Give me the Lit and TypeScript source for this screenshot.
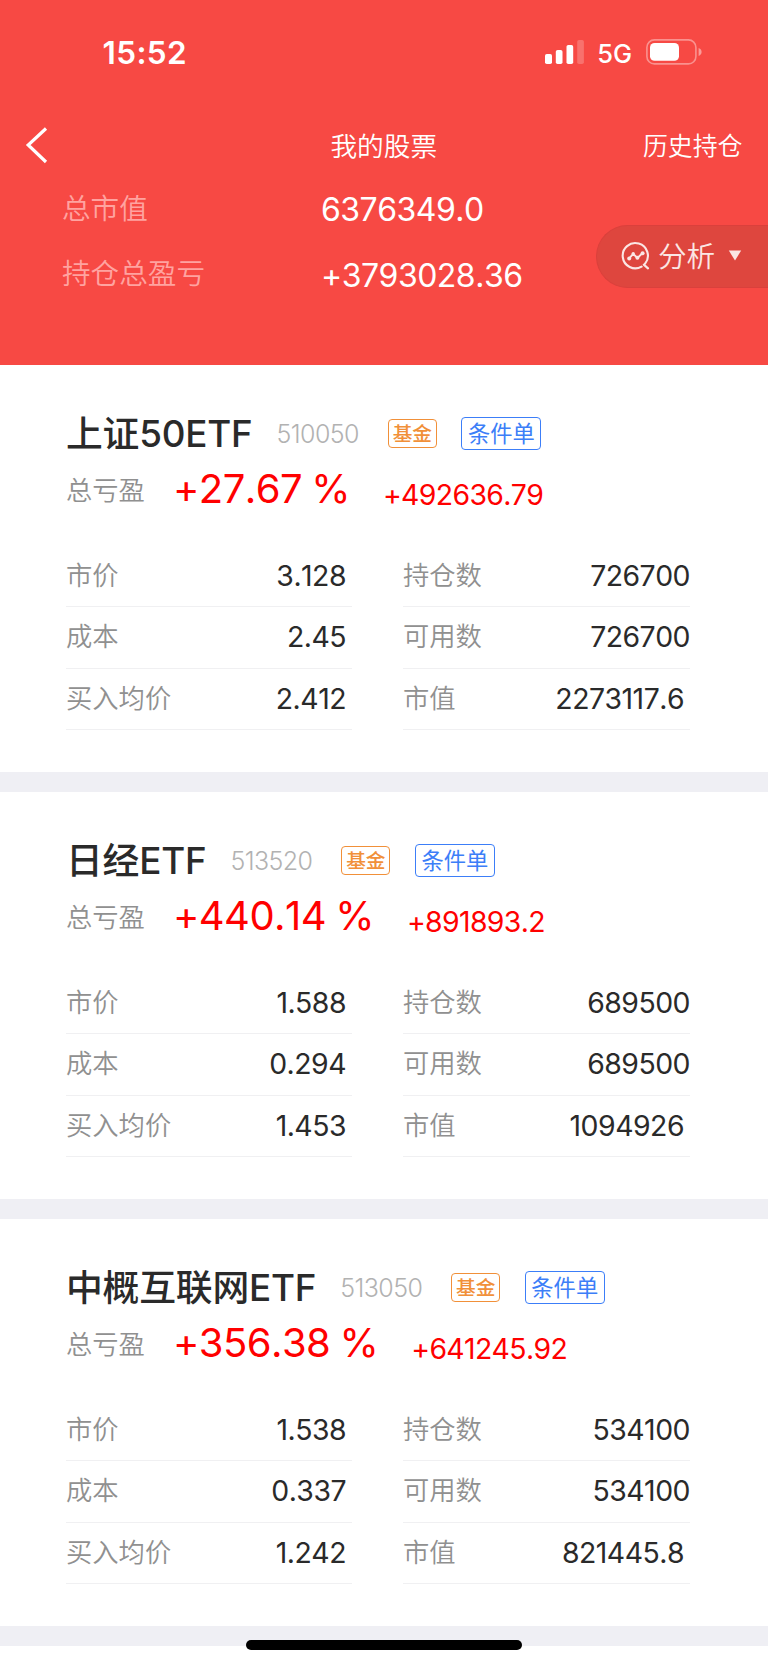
import { LitElement, html, css } from "lit";
import { customElement, property } from "lit/decorators.js";

interface Holding {
  name: string;
  code: string;
  percent: string;
  profit: string;
  left: [string, string][];
  right: [string, string][];
}

const HOLDINGS: Holding[] = [
  {
    name: "上证50ETF", code: "510050", percent: "+27.67 %", profit: "+492636.79",
    left: [["市价", "3.128"], ["成本", "2.45"], ["买入均价", "2.412"]],
    right: [["持仓数", "726700"], ["可用数", "726700"], ["市值", "2273117.6"]],
  },
  {
    name: "日经ETF", code: "513520", percent: "+440.14 %", profit: "+891893.2",
    left: [["市价", "1.588"], ["成本", "0.294"], ["买入均价", "1.453"]],
    right: [["持仓数", "689500"], ["可用数", "689500"], ["市值", "1094926"]],
  },
  {
    name: "中概互联网ETF", code: "513050", percent: "+356.38 %", profit: "+641245.92",
    left: [["市价", "1.538"], ["成本", "0.337"], ["买入均价", "1.242"]],
    right: [["持仓数", "534100"], ["可用数", "534100"], ["市值", "821445.8"]],
  },
];

@customElement("holding-card")
export class HoldingCard extends LitElement {
  @property({ attribute: false }) item!: Holding;

  static styles = css`
    :host { display: block; box-sizing: border-box; height: 427px; padding: 42px 78px 0 66px; background: #fff; border-bottom: 20px solid #efeff4; }
    .title { display: flex; align-items: center; height: 53px; white-space: nowrap; }
    .name { padding-bottom: 5px; font-size: 36.8px; font-weight: 500; letter-spacing: -0.2px; color: #2a2a2a; }
    .code { margin-left: 24px; font-size: 25px; font-weight: 320; letter-spacing: -0.6px; color: #b2b2b2; }
    .tag { box-sizing: border-box; display: flex; justify-content: center; border: 1px solid; border-radius: 4px; }
    .fund { width: 49px; height: 29px; margin-left: 29px; line-height: 28px; font-size: 19.7px; font-weight: 500; color: #f19039; }
    .order { width: 80px; height: 33px; margin-left: 24.5px; line-height: 32px; font-size: 22.3px; color: #3c7ef8; }
    .profit { display: flex; align-items: flex-start; height: 60px; line-height: 58px; white-space: nowrap; }
    .label { font-size: 26.3px; font-weight: 350; color: #909090; }
    .rowlabel { padding-bottom: 5px; }
    .profit .label { line-height: 61px; }
    .percent { margin-left: 28px; font-size: 40px; letter-spacing: -0.55px; word-spacing: -1.5px; font-kerning: none; color: #f00; }
    .amount { margin-left: 33px; line-height: 70px; font-size: 28.4px; letter-spacing: -0.65px; font-kerning: none; color: #f00; }
    .cols { display: grid; grid-template-columns: 286px 287px; column-gap: 51px; margin-top: 26px; }
    .row { box-sizing: border-box; display: flex; align-items: center; justify-content: space-between; height: 61.33px; padding-right: 6px; border-bottom: 1px solid #f0f0f2; }
    .right .row { padding-right: 0; }
    .right .row:last-child { padding-right: 6px; }
    .value { padding-bottom: 1px; font-size: 28.4px; letter-spacing: -0.5px; font-kerning: none; color: #2a2a2a; }
  `;

  private rows(rows: [string, string][]) {
    return rows.map(([k, v]) => html`<div class="row"><span class="label rowlabel">${k}</span><span class="value">${v}</span></div>`);
  }

  render() {
    const h = this.item;
    return html`
      <div class="title">
        <span class="name">${h.name}</span><span class="code">${h.code}</span>
        <span class="tag fund">基金</span><span class="tag order">条件单</span>
      </div>
      <div class="profit">
        <span class="label">总亏盈</span><span class="percent">${h.percent}</span><span class="amount">${h.profit}</span>
      </div>
      <div class="cols">
        <div>${this.rows(h.left)}</div>
        <div class="right">${this.rows(h.right)}</div>
      </div>`;
  }
}

@customElement("app-root")
export class AppRoot extends LitElement {
  static styles = css`
    :host { display: block; position: relative; width: 768px; height: 1665px; overflow: hidden; background: #fff; font-family: Inter, "Noto Sans CJK SC", sans-serif; }
    svg { display: block; }
    .header { position: relative; height: 365px; background: #f74944; color: #fff; }
    .status { box-sizing: border-box; display: flex; align-items: center; height: 104px; padding: 0 66.5px 0 102.5px; }
    .time { flex: 1; font-size: 31.5px; font-weight: 600; letter-spacing: 0.4px; }
    .net { margin: 2px 13.5px 0 13px; font-size: 25.5px; font-weight: 500; }
    .nav { box-sizing: border-box; display: grid; grid-template-columns: 1fr auto 1fr; align-items: center; height: 82px; padding: 0 25.5px 0 25px; }
    .page { padding-bottom: 2px; font-size: 26.7px; font-weight: 350; }
    .history { justify-self: end; padding-bottom: 2px; font-size: 24.9px; font-weight: 350; }
    .summary { display: grid; grid-template-columns: 259px 1fr; grid-auto-rows: 65.5px; align-items: center; margin-top: -10px; padding-left: 62px; }
    .caption { padding-bottom: 5px; font-size: 28.6px; font-weight: 350; color: #ffa3a0; }
    .total { padding-top: 2px; font-size: 32px; letter-spacing: -0.5px; font-kerning: none; }
    .analyse { position: absolute; right: 0; top: 225px; box-sizing: border-box; display: flex; align-items: center; width: 172px; height: 63px; padding-left: 24px; border: 1px solid #da403c; border-right: 0; border-radius: 32px 0 0 32px; background: #de463e; color: #fbe6e4; font-size: 28.6px; font-weight: 350; }
    .chart { margin-bottom: 1px; }
    .word { margin: 0 13px 0 7px; padding-bottom: 5px; }
    .caret { margin-bottom: 2px; }
    .home { position: absolute; left: 246px; bottom: 15px; width: 276px; height: 10px; border-radius: 5px; background: #000; }
  `;

  render() {
    return html`
      <div class="header">
        <div class="status">
          <span class="time">15:52</span>
          <svg width="39" height="24" viewBox="0 0 39 24" fill="#fff">
            <rect x="0" y="14" width="7" height="10" rx="1.8"/>
            <rect x="10.8" y="10" width="6.7" height="14" rx="1.8"/>
            <rect x="21.5" y="5" width="6.7" height="19" rx="1.8"/>
            <rect x="32.2" y="0" width="6.7" height="24" rx="1.8" opacity=".22"/>
          </svg>
          <span class="net">5G</span>
          <svg width="56" height="26" viewBox="0 0 56 26" fill="none">
            <rect x=".9" y=".9" width="49" height="24" rx="7.5" stroke="#fff" stroke-opacity=".4" stroke-width="1.6"/>
            <rect x="4" y="4" width="29" height="17.8" rx="4.6" fill="#fff"/>
            <path d="M52.6 9v8c2-.8 3-2.2 3-4s-1-3.2-3-4z" fill="#fff" fill-opacity=".45"/>
          </svg>
        </div>
        <div class="nav">
          <svg width="24" height="38" viewBox="0 0 24 38" fill="none" stroke="#fff" stroke-width="3.2"><path d="M21 2.5 3.2 19 21 36"/></svg>
          <span class="page">我的股票</span>
          <span class="history">历史持仓</span>
        </div>
        <div class="summary">
          <span class="caption">总市值</span><span class="total">6376349.0</span>
          <span class="caption">持仓总盈亏</span><span class="total">+3793028.36</span>
        </div>
        <div class="analyse">
          <svg class="chart" width="30" height="30" viewBox="0 0 30 30" fill="none" stroke="#fbe6e4" stroke-width="2.1" stroke-linecap="round">
            <path d="M20.6 25.6A12.6 12.6 0 1 1 24.1 22.6M22.8 23.6 27 27.4"/>
            <path d="M8.2 17.4 12.2 12.8 16.4 17 21.4 12.2" stroke-linejoin="round" stroke-width="1.9"/>
            <g fill="#fbe6e4" stroke="none"><circle cx="8.2" cy="17.4" r="2"/><circle cx="12.2" cy="12.8" r="1.7"/><circle cx="16.4" cy="16.8" r="2"/><circle cx="21.6" cy="12.2" r="2"/></g>
          </svg>
          <span class="word">分析</span>
          <svg class="caret" width="14" height="11" viewBox="0 0 14 11"><path d="M.8.5h12.4L7 10.5z" fill="#fbe6e4"/></svg>
        </div>
      </div>
      ${HOLDINGS.map((h) => html`<holding-card .item=${h}></holding-card>`)}
      <div class="home"></div>`;
  }
}
